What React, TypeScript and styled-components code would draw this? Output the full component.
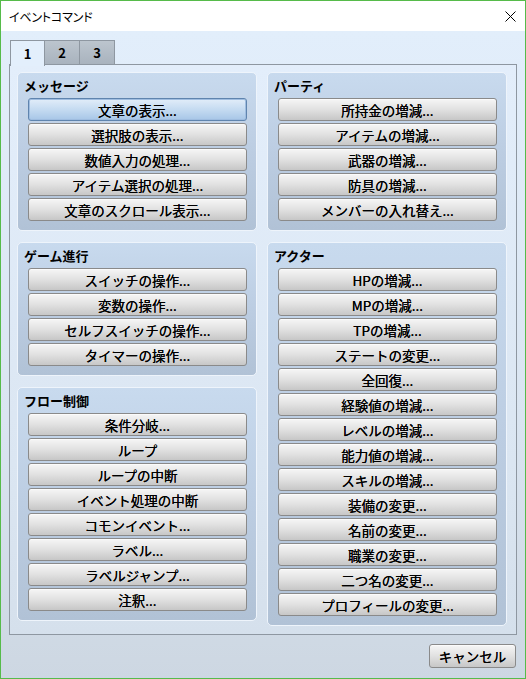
import React from 'react';
import styled, {createGlobalStyle} from 'styled-components';

const GlobalStyle = createGlobalStyle`
    html, body {
        margin: 0;
        padding: 0;
    }
    body {
        font-family: "Noto Sans CJK JP", "Noto Sans", sans-serif;
        color: #000;
    }
`;

const Window = styled.div`
    width: 526px;
    height: 679px;
    box-sizing: border-box;
    border: 1px solid #56bb4a;
    display: flex;
    flex-direction: column;
    background: #fff;
`;

const TitleBar = styled.div`
    height: 30px;
    flex-shrink: 0;
    display: flex;
    align-items: center;
    justify-content: space-between;
    padding: 0 8px 0 8px;
    background: #fff;
    font-size: 12px;
    font-feature-settings: "palt";
    letter-spacing: -0.2px;
`;

const CloseIcon = styled.svg`
    width: 11px;
    height: 11px;
    margin-right: 1px;
    margin-top: 1px;
`;

const Body = styled.div`
    flex: 1;
    display: flex;
    flex-direction: column;
    padding: 9px 8px 10px 8px;
    background: linear-gradient(#e2eefb 0%, #dae5f1 60%, #cdd7e2 100%);
    min-height: 0;
`;

const TabStrip = styled.div`
    display: flex;
    height: 25px;
    margin-left: 1px;
    margin-bottom: -1px;
    position: relative;
    z-index: 1;
`;

const Tab = styled.div<{$active?: boolean}>`
    width: ${p => (p.$active ? 35 : 36)}px;
    height: ${p => (p.$active ? 26 : 25)}px;
    box-sizing: border-box;
    margin-left: ${p => (p.$active ? 0 : -1)}px;
    border: 1px solid #8e97a1;
    border-bottom: ${p => (p.$active ? 'none' : '1px solid #8e97a1')};
    background: ${p => (p.$active ? '#e3effc' : 'linear-gradient(#bcc5ce, #a9b3be)')};
    display: flex;
    align-items: center;
    justify-content: center;
    padding-bottom: ${p => (p.$active ? 1 : 0)}px;
    font-size: 13px;
    font-weight: bold;
    position: relative;
    z-index: ${p => (p.$active ? 2 : 1)};
`;

const Panel = styled.div`
    flex: 1;
    border: 1px solid #8e97a1;
    background: linear-gradient(#e3eefb 0%, #dbe6f2 70%, #d5e0ec 100%);
    padding: 7px 9px 0 7px;
    display: grid;
    grid-template-columns: 240px 240px;
    column-gap: 10px;
    align-items: start;
`;

const Column = styled.div`
    display: flex;
    flex-direction: column;
    gap: 11px;
`;

const Group = styled.div`
    border: 1px solid #eef4fb;
    border-radius: 5px;
    background: linear-gradient(#c8daee 0%, #bccde2 50%, #b1c2d6 100%);
`;

const GroupTitle = styled.div`
    height: 25px;
    line-height: 25px;
    padding-left: 6px;
    font-size: 13px;
    font-weight: bold;
`;

const ButtonList = styled.div`
    display: flex;
    flex-direction: column;
    gap: 2px;
    padding: 0 9px 9px 10px;
`;

const CmdButton = styled.div<{$focused?: boolean}>`
    height: 23px;
    box-sizing: border-box;
    border: 1px solid ${p => (p.$focused ? '#5f84ae' : '#8a8a8a')};
    border-radius: 3px;
    background: ${p =>
        p.$focused
            ? 'linear-gradient(#e2edf9 0%, #c5dbf1 50%, #a7c6e7 100%)'
            : 'linear-gradient(#f6f6f6 0%, #e1e1e1 50%, #c7c7c7 100%)'};
    box-shadow: ${p => (p.$focused ? 'inset 0 0 0 1px #9fbde0' : 'inset 0 1px 0 #fbfbfb')};
    display: flex;
    align-items: center;
    justify-content: center;
    font-size: 13.5px;
    white-space: nowrap;
    text-shadow: 0 0 0.4px #000;
`;

const Footer = styled.div`
    display: flex;
    justify-content: flex-end;
    margin-top: 9px;
    padding-right: 1px;
`;

const CancelButton = styled(CmdButton)`
    width: 87px;
    height: 24px;
`;

const groups: {title: string; items: string[]; focusFirst?: boolean}[][] = [
    [
        {
            title: 'メッセージ',
            focusFirst: true,
            items: ['文章の表示...', '選択肢の表示...', '数値入力の処理...', 'アイテム選択の処理...', '文章のスクロール表示...'],
        },
        {
            title: 'ゲーム進行',
            items: ['スイッチの操作...', '変数の操作...', 'セルフスイッチの操作...', 'タイマーの操作...'],
        },
        {
            title: 'フロー制御',
            items: ['条件分岐...', 'ループ', 'ループの中断', 'イベント処理の中断', 'コモンイベント...', 'ラベル...', 'ラベルジャンプ...', '注釈...'],
        },
    ],
    [
        {
            title: 'パーティ',
            items: ['所持金の増減...', 'アイテムの増減...', '武器の増減...', '防具の増減...', 'メンバーの入れ替え...'],
        },
        {
            title: 'アクター',
            items: [
                'HPの増減...',
                'MPの増減...',
                'TPの増減...',
                'ステートの変更...',
                '全回復...',
                '経験値の増減...',
                'レベルの増減...',
                '能力値の増減...',
                'スキルの増減...',
                '装備の変更...',
                '名前の変更...',
                '職業の変更...',
                '二つ名の変更...',
                'プロフィールの変更...',
            ],
        },
    ],
];

export default function App() {
    return (
        <>
            <GlobalStyle />
            <Window>
                <TitleBar>
                    <span>イベントコマンド</span>
                    <CloseIcon viewBox="0 0 11 11">
                        <path d="M0.5 0.5 L10.5 10.5 M10.5 0.5 L0.5 10.5" stroke="#000" strokeWidth="1" fill="none" />
                    </CloseIcon>
                </TitleBar>
                <Body>
                    <TabStrip>
                        <Tab $active>1</Tab>
                        <Tab>2</Tab>
                        <Tab>3</Tab>
                    </TabStrip>
                    <Panel>
                        {groups.map((col, ci) => (
                            <Column key={ci}>
                                {col.map(g => (
                                    <Group key={g.title}>
                                        <GroupTitle>{g.title}</GroupTitle>
                                        <ButtonList>
                                            {g.items.map((item, i) => (
                                                <CmdButton key={item} $focused={g.focusFirst && i === 0}>
                                                    {item}
                                                </CmdButton>
                                            ))}
                                        </ButtonList>
                                    </Group>
                                ))}
                            </Column>
                        ))}
                    </Panel>
                    <Footer>
                        <CancelButton>キャンセル</CancelButton>
                    </Footer>
                </Body>
            </Window>
        </>
    );
}
